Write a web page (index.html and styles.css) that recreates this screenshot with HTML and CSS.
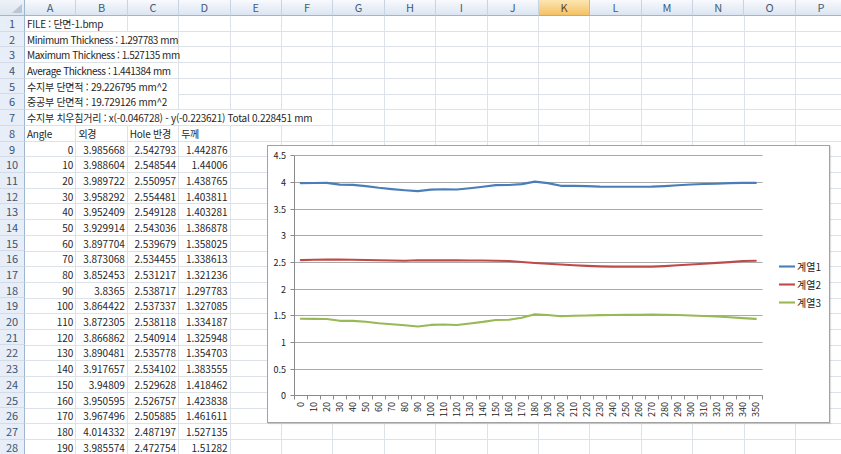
FILE: index.html
```html
<!DOCTYPE html>
<html lang="ko">
<head>
<meta charset="utf-8">
<title>Excel - 단면-1</title>
<link rel="stylesheet" href="styles.css">
</head>
<body>
<div class="sheet">
  <div class="cols">
    <div class="ch corner"></div>
    <div class="ch">A</div><div class="ch">B</div><div class="ch">C</div><div class="ch">D</div>
    <div class="ch">E</div><div class="ch">F</div><div class="ch">G</div><div class="ch">H</div>
    <div class="ch">I</div><div class="ch">J</div><div class="ch sel">K</div><div class="ch">L</div>
    <div class="ch">M</div><div class="ch">N</div><div class="ch">O</div><div class="ch">P</div>
  </div>
  <div class="grid">
    <div class="rh">1</div><div class="c t ov s2">FILE : 단면-1.bmp</div>
    <div class="rh">2</div><div class="c t lat ov s3">Minimum Thickness : 1.297783 mm</div>
    <div class="rh">3</div><div class="c t lat ov s3">Maximum Thickness : 1.527135 mm</div>
    <div class="rh">4</div><div class="c t lat ov s3">Average Thickness : 1.441384 mm</div>
    <div class="rh">5</div><div class="c t ov s3">수지부 단면적 : 29.226795 mm^2</div>
    <div class="rh">6</div><div class="c t ov s3">중공부 단면적 : 19.729126 mm^2</div>
    <div class="rh">7</div><div class="c t ov s6">수지부 치우침거리 : x(-0.046728) - y(-0.223621) Total 0.228451 mm</div>
    <div class="rh">8</div><div class="c t">Angle</div><div class="c t">외경</div><div class="c t">Hole 반경</div><div class="c t">두께</div>
    <div class="rh">9</div><div class="c n">0</div><div class="c n">3.985668</div><div class="c n">2.542793</div><div class="c n">1.442876</div>
    <div class="rh">10</div><div class="c n">10</div><div class="c n">3.988604</div><div class="c n">2.548544</div><div class="c n">1.44006</div>
    <div class="rh">11</div><div class="c n">20</div><div class="c n">3.989722</div><div class="c n">2.550957</div><div class="c n">1.438765</div>
    <div class="rh">12</div><div class="c n">30</div><div class="c n">3.958292</div><div class="c n">2.554481</div><div class="c n">1.403811</div>
    <div class="rh">13</div><div class="c n">40</div><div class="c n">3.952409</div><div class="c n">2.549128</div><div class="c n">1.403281</div>
    <div class="rh">14</div><div class="c n">50</div><div class="c n">3.929914</div><div class="c n">2.543036</div><div class="c n">1.386878</div>
    <div class="rh">15</div><div class="c n">60</div><div class="c n">3.897704</div><div class="c n">2.539679</div><div class="c n">1.358025</div>
    <div class="rh">16</div><div class="c n">70</div><div class="c n">3.873068</div><div class="c n">2.534455</div><div class="c n">1.338613</div>
    <div class="rh">17</div><div class="c n">80</div><div class="c n">3.852453</div><div class="c n">2.531217</div><div class="c n">1.321236</div>
    <div class="rh">18</div><div class="c n">90</div><div class="c n">3.8365</div><div class="c n">2.538717</div><div class="c n">1.297783</div>
    <div class="rh">19</div><div class="c n">100</div><div class="c n">3.864422</div><div class="c n">2.537337</div><div class="c n">1.327085</div>
    <div class="rh">20</div><div class="c n">110</div><div class="c n">3.872305</div><div class="c n">2.538118</div><div class="c n">1.334187</div>
    <div class="rh">21</div><div class="c n">120</div><div class="c n">3.866862</div><div class="c n">2.540914</div><div class="c n">1.325948</div>
    <div class="rh">22</div><div class="c n">130</div><div class="c n">3.890481</div><div class="c n">2.535778</div><div class="c n">1.354703</div>
    <div class="rh">23</div><div class="c n">140</div><div class="c n">3.917657</div><div class="c n">2.534102</div><div class="c n">1.383555</div>
    <div class="rh">24</div><div class="c n">150</div><div class="c n">3.94809</div><div class="c n">2.529628</div><div class="c n">1.418462</div>
    <div class="rh">25</div><div class="c n">160</div><div class="c n">3.950595</div><div class="c n">2.526757</div><div class="c n">1.423838</div>
    <div class="rh">26</div><div class="c n">170</div><div class="c n">3.967496</div><div class="c n">2.505885</div><div class="c n">1.461611</div>
    <div class="rh">27</div><div class="c n">180</div><div class="c n">4.014332</div><div class="c n">2.487197</div><div class="c n">1.527135</div>
    <div class="rh">28</div><div class="c n">190</div><div class="c n">3.985574</div><div class="c n">2.472754</div><div class="c n">1.51282</div>
  </div>

  <div class="chart">
    <svg width="561" height="276" viewBox="1 1 561 276">
      <g class="grid-lines">
        <line x1="27.5" y1="10.5" x2="495.5" y2="10.5"/>
        <line x1="27.5" y1="37.5" x2="495.5" y2="37.5"/>
        <line x1="27.5" y1="64.5" x2="495.5" y2="64.5"/>
        <line x1="27.5" y1="90.5" x2="495.5" y2="90.5"/>
        <line x1="27.5" y1="117.5" x2="495.5" y2="117.5"/>
        <line x1="27.5" y1="144.5" x2="495.5" y2="144.5"/>
        <line x1="27.5" y1="170.5" x2="495.5" y2="170.5"/>
        <line x1="27.5" y1="197.5" x2="495.5" y2="197.5"/>
        <line x1="27.5" y1="224.5" x2="495.5" y2="224.5"/>
      </g>
      <g class="axis">
        <line x1="27.5" y1="10.5" x2="27.5" y2="250.5"/>
        <line x1="27.5" y1="250.5" x2="495.5" y2="250.5"/>
        <path d="M23.5 10.5h4M23.5 37.5h4M23.5 64.5h4M23.5 90.5h4M23.5 117.5h4M23.5 144.5h4M23.5 170.5h4M23.5 197.5h4M23.5 224.5h4M23.5 250.5h4"/>
        <path d="M27.5 250.5v4M40.5 250.5v4M53.5 250.5v4M66.5 250.5v4M79.5 250.5v4M92.5 250.5v4M105.5 250.5v4M118.5 250.5v4M131.5 250.5v4M144.5 250.5v4M157.5 250.5v4M170.5 250.5v4M183.5 250.5v4M196.5 250.5v4M209.5 250.5v4M222.5 250.5v4M235.5 250.5v4M248.5 250.5v4M261.5 250.5v4M274.5 250.5v4M287.5 250.5v4M300.5 250.5v4M313.5 250.5v4M326.5 250.5v4M339.5 250.5v4M352.5 250.5v4M365.5 250.5v4M378.5 250.5v4M391.5 250.5v4M404.5 250.5v4M417.5 250.5v4M430.5 250.5v4M443.5 250.5v4M456.5 250.5v4M469.5 250.5v4M482.5 250.5v4M495.5 250.5v4"/>
      </g>
      <g class="ylab">
        <text x="19" y="10.5">4.5</text>
        <text x="19" y="37.5">4</text>
        <text x="19" y="64.5">3.5</text>
        <text x="19" y="90.5">3</text>
        <text x="19" y="117.5">2.5</text>
        <text x="19" y="144.5">2</text>
        <text x="19" y="170.5">1.5</text>
        <text x="19" y="197.5">1</text>
        <text x="19" y="224.5">0.5</text>
        <text x="19" y="250.5">0</text>
      </g>
      <g class="xlab">
        <text transform="translate(33.8 257) rotate(-90)">0</text>
        <text transform="translate(46.8 257) rotate(-90)">10</text>
        <text transform="translate(59.8 257) rotate(-90)">20</text>
        <text transform="translate(72.8 257) rotate(-90)">30</text>
        <text transform="translate(85.8 257) rotate(-90)">40</text>
        <text transform="translate(98.8 257) rotate(-90)">50</text>
        <text transform="translate(111.8 257) rotate(-90)">60</text>
        <text transform="translate(124.8 257) rotate(-90)">70</text>
        <text transform="translate(137.8 257) rotate(-90)">80</text>
        <text transform="translate(150.8 257) rotate(-90)">90</text>
        <text transform="translate(163.8 257) rotate(-90)">100</text>
        <text transform="translate(176.8 257) rotate(-90)">110</text>
        <text transform="translate(189.8 257) rotate(-90)">120</text>
        <text transform="translate(202.8 257) rotate(-90)">130</text>
        <text transform="translate(215.8 257) rotate(-90)">140</text>
        <text transform="translate(228.8 257) rotate(-90)">150</text>
        <text transform="translate(241.8 257) rotate(-90)">160</text>
        <text transform="translate(254.8 257) rotate(-90)">170</text>
        <text transform="translate(267.8 257) rotate(-90)">180</text>
        <text transform="translate(280.8 257) rotate(-90)">190</text>
        <text transform="translate(293.8 257) rotate(-90)">200</text>
        <text transform="translate(306.8 257) rotate(-90)">210</text>
        <text transform="translate(319.8 257) rotate(-90)">220</text>
        <text transform="translate(332.8 257) rotate(-90)">230</text>
        <text transform="translate(345.8 257) rotate(-90)">240</text>
        <text transform="translate(358.8 257) rotate(-90)">250</text>
        <text transform="translate(371.8 257) rotate(-90)">260</text>
        <text transform="translate(384.8 257) rotate(-90)">270</text>
        <text transform="translate(397.8 257) rotate(-90)">280</text>
        <text transform="translate(410.8 257) rotate(-90)">290</text>
        <text transform="translate(423.8 257) rotate(-90)">300</text>
        <text transform="translate(436.8 257) rotate(-90)">310</text>
        <text transform="translate(449.8 257) rotate(-90)">320</text>
        <text transform="translate(462.8 257) rotate(-90)">330</text>
        <text transform="translate(475.8 257) rotate(-90)">340</text>
        <text transform="translate(488.8 257) rotate(-90)">350</text>
      </g>
      <polyline class="s1" points="33.8,38.13 46.8,37.97 59.8,37.91 72.8,39.59 85.8,39.9 98.8,41.1 111.8,42.82 124.8,44.14 137.8,45.24 150.8,46.09 163.8,44.6 176.8,44.18 189.8,44.47 202.8,43.21 215.8,41.76 228.8,40.14 241.8,40 254.8,39.1 267.8,36.6 280.8,38.14 293.8,40.83 306.8,40.83 319.8,41.1 332.8,41.63 345.8,41.74 358.8,41.74 371.8,41.74 384.8,41.63 397.8,41.1 410.8,40.3 423.8,39.5 436.8,38.97 449.8,38.7 462.8,38.17 475.8,37.9 488.8,37.9"/>
      <polyline class="s2" points="33.8,115.08 46.8,114.78 59.8,114.65 72.8,114.46 85.8,114.75 98.8,115.07 111.8,115.25 124.8,115.53 137.8,115.7 150.8,115.3 163.8,115.38 176.8,115.33 189.8,115.19 202.8,115.46 215.8,115.55 228.8,115.79 241.8,115.94 254.8,117.05 267.8,118.05 280.8,118.82 293.8,119.5 306.8,120.3 319.8,120.83 332.8,121.37 345.8,121.63 358.8,121.63 371.8,121.63 384.8,121.63 397.8,121.1 410.8,120.3 423.8,119.5 436.8,118.7 449.8,117.9 462.8,117.1 475.8,116.03 488.8,115.77"/>
      <polyline class="s3" points="33.8,173.75 46.8,173.9 59.8,173.97 72.8,175.83 85.8,175.86 98.8,176.73 111.8,178.27 124.8,179.31 137.8,180.23 150.8,181.49 163.8,179.92 176.8,179.54 189.8,179.98 202.8,178.45 215.8,176.91 228.8,175.05 241.8,174.76 254.8,172.75 267.8,169.25 280.8,170.02 293.8,171.23 306.8,170.7 319.8,170.43 332.8,170.17 345.8,170.06 358.8,169.9 371.8,169.74 384.8,169.63 397.8,169.74 410.8,170.06 423.8,170.43 436.8,170.97 449.8,171.5 462.8,172.3 475.8,173.1 488.8,173.9"/>
      <g class="legend">
        <line class="s1" x1="512" y1="121.5" x2="528" y2="121.5"/>
        <text x="530" y="121.5">계열1</text>
        <line class="s2" x1="512" y1="139.5" x2="528" y2="139.5"/>
        <text x="530" y="139.5">계열2</text>
        <line class="s3" x1="512" y1="157.5" x2="528" y2="157.5"/>
        <text x="530" y="157.5">계열3</text>
      </g>
    </svg>
  </div>
</div>
</body>
</html>
```
FILE: styles.css
```css
html, body {
  margin: 0;
  padding: 0;
  background: #fff;
}

body {
  font-family: "Noto Sans CJK KR", "Noto Sans", sans-serif;
  font-size: 10px;
  color: #262626;
  overflow: hidden;
}

.sheet {
  position: relative;
  width: 841px;
  height: 454px;
  overflow: hidden;
}

.cols,
.grid {
  display: grid;
  grid-template-columns: 25px repeat(16, 51.4px);
}

.cols {
  height: 16px;
}

.ch {
  box-sizing: border-box;
  height: 16px;
  background: linear-gradient(#f8fafd, #dbe5f1);
  border-right: 1px solid #c7d3e2;
  border-bottom: 1px solid #9eb6ce;
  text-align: center;
  font-size: 11px;
  line-height: 15px;
  color: #45597a;
}

.ch.sel {
  background: linear-gradient(#fde6b2, #f3c165);
  border-right-color: #eab35a;
  border-bottom-color: #e2a446;
  color: #5a4622;
}

.corner {
  position: relative;
  background: linear-gradient(#eef2f8, #dde5ef);
  border-right-color: #9eb6ce;
}

.corner::after {
  content: "";
  position: absolute;
  right: 2px;
  bottom: 2px;
  border-style: solid;
  border-width: 0 0 9px 10px;
  border-color: transparent transparent #b9c6d6 transparent;
}

.grid {
  grid-auto-rows: 15.7px;
  background-image:
    repeating-linear-gradient(to bottom, transparent 0 14.7px, #dde2e8 14.7px 15.7px),
    repeating-linear-gradient(to right, transparent 0 50.4px, #dde2e8 50.4px 51.4px);
  background-position: 0 0, 25px 0;
  height: 438px;
}

.rh {
  grid-column: 1;
  box-sizing: border-box;
  background: #e7eef7;
  border-right: 1px solid #9eb6ce;
  border-bottom: 1px solid #d2dce8;
  text-align: center;
  font-size: 11px;
  line-height: 15px;
  color: #3e5373;
}

.c {
  padding: 0 2px;
  line-height: 15px;
  white-space: nowrap;
  overflow: hidden;
}

.t {
  letter-spacing: -0.25px;
}

.t.lat {
  letter-spacing: -0.45px;
}

.n {
  text-align: right;
  padding-right: 3px;
}

.ov {
  overflow: visible;
  background: linear-gradient(#fff, #fff) no-repeat 0 0 / calc(100% - 1px) calc(100% - 1px);
}

.s2 { grid-column: span 2; }
.s3 { grid-column: span 3; }
.s6 { grid-column: span 6; }

.chart {
  position: absolute;
  left: 267px;
  top: 145px;
  width: 563px;
  height: 278px;
  box-sizing: border-box;
  border: 1px solid #a2a2a2;
  background: #fff;
  box-shadow: 1px 1px 1px rgba(0, 0, 0, 0.12);
}

.chart svg {
  display: block;
  font-family: "Noto Sans CJK KR", "Noto Sans", sans-serif;
}

.grid-lines line {
  stroke: #a9a9a9;
  stroke-width: 1;
}

.axis line,
.axis path {
  stroke: #8a8a8a;
  stroke-width: 1;
  fill: none;
}

.ylab text {
  font-size: 9px;
  fill: #222;
  text-anchor: end;
  dominant-baseline: central;
}

.xlab text {
  font-size: 9px;
  fill: #222;
  text-anchor: end;
  dominant-baseline: central;
}

polyline,
.legend line {
  fill: none;
  stroke-width: 2.1;
  stroke-linejoin: round;
  stroke-linecap: round;
}

.s1 { stroke: #4a7ebb; }
.s2 { stroke: #be4b48; }
.s3 { stroke: #98b954; }

.legend line {
  stroke-linecap: butt;
}

.legend text {
  font-size: 10px;
  fill: #222;
  dominant-baseline: central;
}
```
